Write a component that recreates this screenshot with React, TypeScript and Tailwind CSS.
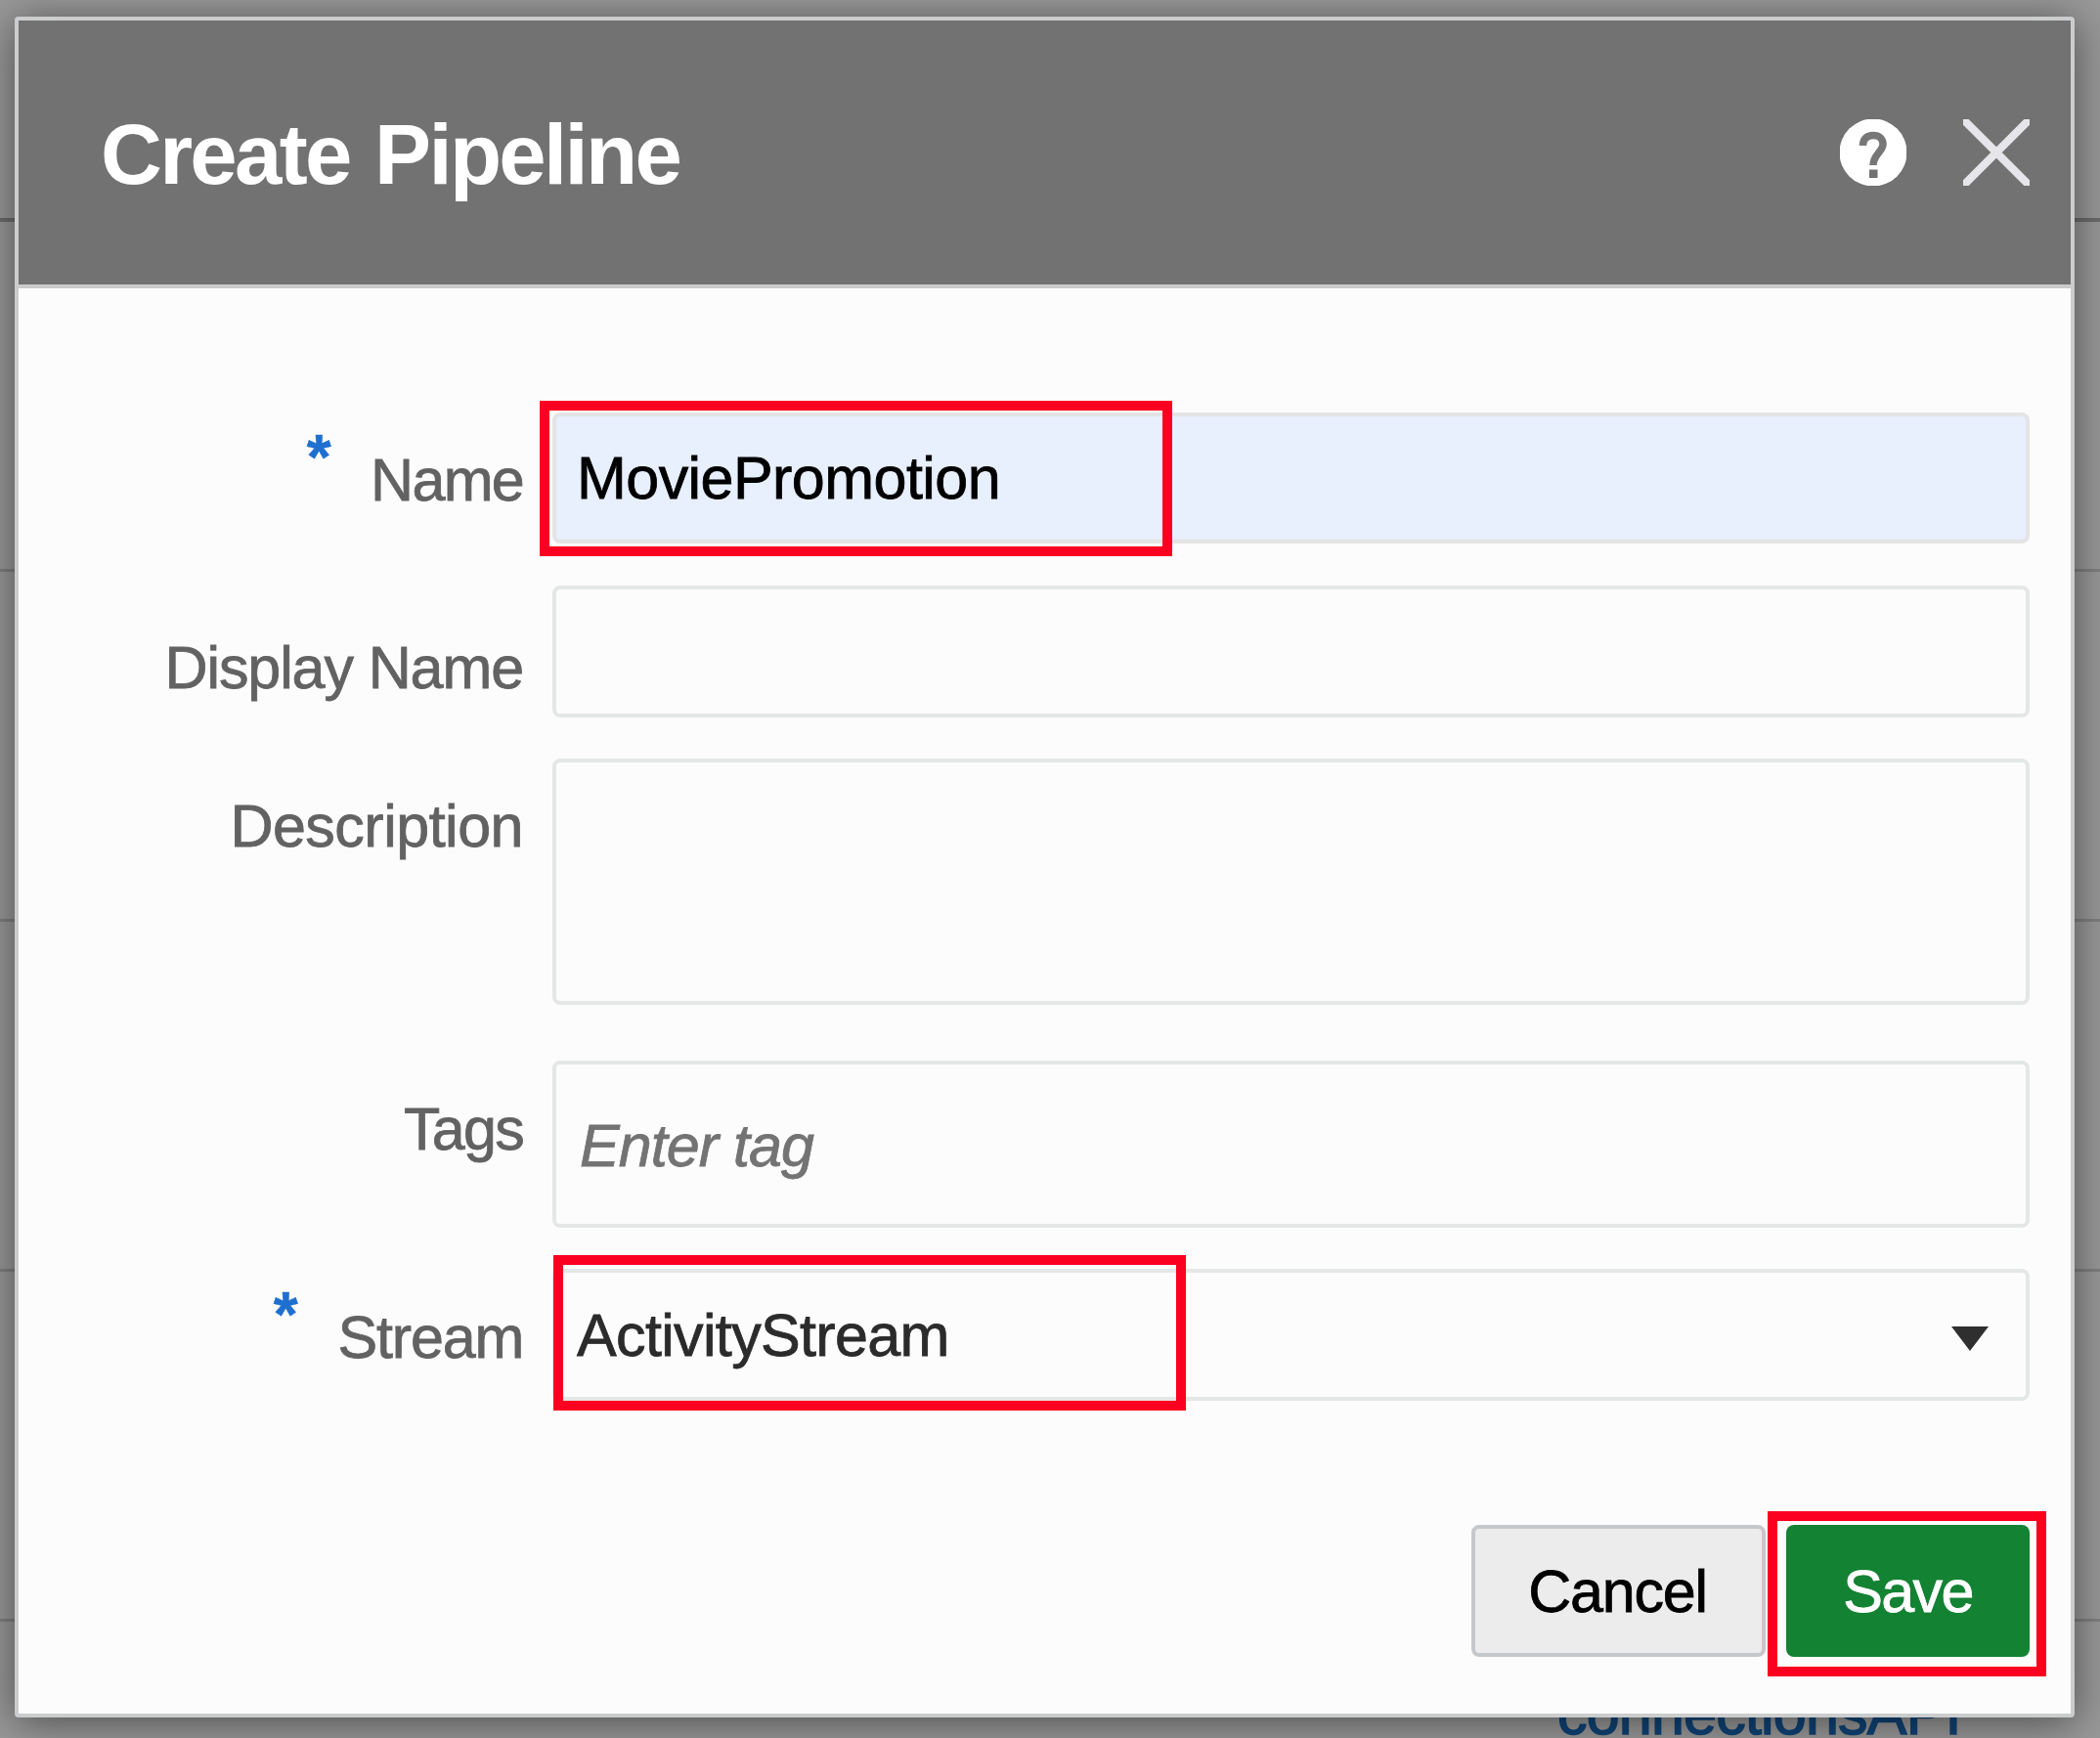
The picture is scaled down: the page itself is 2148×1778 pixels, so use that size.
import React from "react";

type RowProps = {
  label: string;
  required?: boolean;
  rowClass: string;
  labelClass: string;
  fieldClass: string;
  children?: React.ReactNode;
};

function FormRow({ label, required, rowClass, labelClass, fieldClass, children }: RowProps) {
  return (
    <div className={`flex ${rowClass}`}>
      <div className={`flex w-[516px] shrink-0 justify-end text-[#626262] ${labelClass}`}>
        {required && (
          <span className="-mt-[23px] mr-[42px] h-[60px] text-[64px] leading-[60px] font-bold text-[#1f6fce] [-webkit-text-stroke:0.5px_currentColor]">
            *
          </span>
        )}
        <label className="whitespace-nowrap">{label}</label>
      </div>
      <div
        className={`relative ml-[30px] w-[1511px] rounded-[8px] border-4 whitespace-nowrap ${fieldClass}`}
      >
        {children}
      </div>
    </div>
  );
}

function HelpIcon() {
  return (
    <svg width="68" height="68" viewBox="0 0 68 68">
      <circle cx="34" cy="34" r="34.5" fill="#ffffff" />
      <path
        d="M23.500 27 C23.500 20 27.500 16.500 34 16.500 C40.500 16.500 44 20 44 25.500 C44 33 34 36 34 47"
        fill="none"
        stroke="#777777"
        strokeWidth="7.500"
      />
      <rect x="30" y="51.500" width="8.500" height="8.500" fill="#727272" />
    </svg>
  );
}

function CloseIcon() {
  return (
    <svg width="68" height="68" viewBox="0 0 68 68">
      <path d="M-2 -2 L70 70 M70 -2 L-2 70" stroke="#e6e6ea" strokeWidth="8" />
    </svg>
  );
}

export default function App() {
  return (
    <div className="relative h-[1778px] w-[2148px] overflow-hidden bg-[#999999] font-['Liberation_Sans',Arial,sans-serif] text-[61px] leading-[60px] tracking-[-0.95px] [-webkit-text-stroke:0.8px_currentColor]">
      {/* Dimmed list behind the dialog */}
      <div className="absolute inset-0 flex flex-col">
        <div className="h-[227px] shrink-0 border-b-4 border-[#6c6c6c]" />
        <div className="h-[358px] shrink-0 border-b-[3px] border-[#808080]" />
        <div className="h-[358px] shrink-0 border-b-[3px] border-[#808080]" />
        <div className="h-[358px] shrink-0 border-b-[3px] border-[#808080]" />
        <div className="h-[358px] shrink-0 border-b-[3px] border-[#808080]" />
        <div className="mt-[64px] pl-[1593px] tracking-[-0.8px] whitespace-nowrap text-[#104477] [-webkit-text-stroke:1.5px_currentColor]">
          connectionsAPI
        </div>
      </div>

      <div className="relative mt-[17px] ml-[15px] flex h-[1740px] w-[2107px] flex-col rounded-[4px] border-4 border-[#cbcccd] bg-[#fcfcfc] shadow-[0_5px_44px_rgba(0,0,0,0.5)]">
        <header className="flex h-[274px] shrink-0 items-start justify-between border-b-4 border-[#cbcbcb] bg-[#727272] pr-[42px] pl-[84px]">
          <h1 className="mt-[87px] text-[87px] leading-[100px] font-bold tracking-[-2.7px] text-white [word-spacing:4px] [-webkit-text-stroke:0px]">
            Create Pipeline
          </h1>
          <div className="mt-[101px] flex gap-[58px]">
            <HelpIcon />
            <CloseIcon />
          </div>
        </header>

        <main className="flex flex-col pt-[127px]">
          <FormRow
            label="Name"
            required
            rowClass="h-[134px]"
            labelClass="pt-[39px] tracking-[-1.7px]"
            fieldClass="border-[#e4e4e4] bg-[#e8effd] pl-[21px] pt-[33px] text-black tracking-[-0.55px]"
          >
            MoviePromotion
            <div className="absolute -top-[16px] -left-[17px] h-[159px] w-[647px] border-[10px] border-[#fb0020]" />
          </FormRow>
          <FormRow
            label="Display Name"
            rowClass="mt-[43px] h-[135px]"
            labelClass="pt-[54px] tracking-[-1.1px]"
            fieldClass="border-[#e4e7e6]"
          />
          <FormRow
            label="Description"
            rowClass="mt-[42px] h-[252px]"
            labelClass="pt-[39px] tracking-[-0.5px]"
            fieldClass="border-[#e4e7e6]"
          />
          <FormRow
            label="Tags"
            rowClass="mt-[57px] h-[171px]"
            labelClass="pt-[40px] tracking-[-1.7px]"
            fieldClass="border-[#e4e7e6] pl-[24px] pt-[53px] italic text-[#737373]"
          >
            Enter tag
          </FormRow>
          <FormRow
            label="Stream"
            required
            rowClass="mt-[42px] h-[135px]"
            labelClass="pt-[40px] tracking-[-1.2px]"
            fieldClass="flex items-start justify-between border-[#e4e7e6] pl-[21px] pr-[38px] pt-[34px] text-[#2b2b2b] tracking-[-0.65px]"
          >
            <span>ActivityStream</span>
            <svg className="mt-[21px]" width="38" height="25" viewBox="0 0 38 25">
              <path d="M0 0H38L19 25Z" fill="#2f2f2f" />
            </svg>
            <div className="absolute -top-[18px] -left-[3px] h-[159px] w-[647px] border-[10px] border-[#fb0020]" />
          </FormRow>
        </main>

        <footer className="mt-[127px] flex justify-end gap-[21px] pr-[42px]">
          <button className="h-[135px] w-[301px] rounded-[8px] border-4 border-[#c5c8ca] bg-[#ececec] pr-[2px] tracking-[-1.2px] text-black">
            Cancel
          </button>
          <div className="relative">
            <button className="h-[135px] w-[249px] rounded-[8px] bg-[#138233] tracking-[-1.6px] text-white">
              Save
            </button>
            <div className="absolute -top-[14px] -left-[19px] h-[169px] w-[285px] border-[10px] border-[#fb0020]" />
          </div>
        </footer>
      </div>
    </div>
  );
}
